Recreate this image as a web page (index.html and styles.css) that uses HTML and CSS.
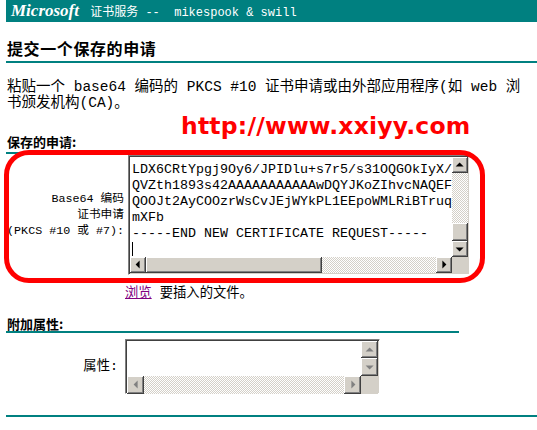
FILE: index.html
```html
<!DOCTYPE html>
<html lang="zh-CN">
<head>
    <meta charset="UTF-8">
    <title>Microsoft 证书服务</title>
    <link rel="stylesheet" href="styles.css">
</head>
<body>
    <div class="banner">
        <span class="ms">Microsoft</span> 证书服务 --&nbsp; mikespook &amp; swill
    </div>

    <div class="page">
        <h2 class="title">提交一个保存的申请</h2>

        <p class="intro">粘贴一个 base64 编码的 PKCS #10 证书申请或由外部应用程序(如 web 浏<br>书颁发机构(CA)。</p>

        <h3 class="section">保存的申请:</h3>

        <div class="row row-request">
            <div class="label">Base64 编码<br>证书申请<br>(PKCS #10 或 #7):</div>
            <div class="box box-request">
                <div class="text">LDX6CRtYpgj9Oy6/JPIDlu+s7r5/s31OQGOkIyX/
QVZth1893s42AAAAAAAAAAAwDQYJKoZIhvcNAQEF
QOOJt2AyCOOzrWsCvJEjWYkPL1EEpoWMLRiBTruq
mXFb
-----END NEW CERTIFICATE REQUEST-----
<span class="caret"></span></div>
                <div class="vbar">
                    <div class="btn up"></div>
                    <div class="track"></div>
                    <div class="btn thumb"></div>
                    <div class="btn down"></div>
                </div>
                <div class="hbar">
                    <div class="btn left"></div>
                    <div class="btn thumb"></div>
                    <div class="track"></div>
                    <div class="btn right"></div>
                </div>
                <div class="corner"></div>
            </div>
        </div>

        <div class="browse"><a href="#">浏览</a> 要插入的文件。</div>

        <h3 class="section section-attr">附加属性:</h3>

        <div class="row row-attr">
            <div class="label">属性:</div>
            <div class="box box-attr">
                <div class="text"></div>
                <div class="vbar">
                    <div class="btn up off"></div>
                    <div class="btn down off"></div>
                </div>
                <div class="hbar">
                    <div class="btn left off"></div>
                    <div class="track"></div>
                    <div class="btn right off"></div>
                </div>
                <div class="corner"></div>
            </div>
        </div>

        <div class="rule"></div>
    </div>

    <!-- watermark + red marker drawn over the page -->
    <div class="mark">http://www.xxiyy.com</div>
    <div class="ring"></div>
</body>
</html>
```

FILE: styles.css
```css
:root {
    --teal: #008080;
    --face: #d4d0c8;
    --shadow: #808080;
    --dark: #404040;
}

* {
    margin: 0;
    padding: 0;
    box-sizing: border-box;
}

body {
    font-family: "Liberation Mono", "Noto Sans CJK SC", monospace;
    font-size: 13.33px;
    line-height: 16px;
    color: #000;
    background: #fff;
    width: 537px;
    height: 430px;
    overflow: hidden;
    position: relative;
}

.banner {
    margin-left: 6px;
    height: 22px;
    background: var(--teal);
    color: #fff;
    font-size: 12px;
    line-height: 22px;
    padding-left: 5px;
    white-space: nowrap;
}

.banner .ms {
    font-family: "Liberation Serif", serif;
    font-style: italic;
    font-weight: bold;
    font-size: 17px;
    margin-right: 4px;
}

.page {
    padding-left: 6px;
}

.title {
    font-family: "Noto Sans CJK SC", sans-serif;
    font-size: 16px;
    font-weight: bold;
    letter-spacing: 0.6px;
    line-height: 20px;
    margin-top: 16px;
    padding-left: 1px;
    padding-bottom: 3px;
    border-bottom: 2px solid var(--teal);
    width: 531px;
}

.intro {
    margin-top: 16px;
    padding-left: 1px;
    font-size: 14.5px;
    white-space: nowrap;
}

.section {
    font-family: "Noto Sans CJK SC", sans-serif;
    font-size: 13px;
    font-weight: bold;
    line-height: 16px;
    margin-top: 23px;
    padding-left: 1px;
    padding-bottom: 2px;
    border-bottom: 2px solid var(--teal);
    width: 453px;
}

.section-attr {
    margin-top: 14px;
    line-height: 15px;
    padding-bottom: 0;
}

.row {
    display: flex;
    align-items: center;
}

.row-request {
    margin-top: 1px;
    gap: 4px;
}

.row-request .label {
    width: 118px;
    font-size: 11.7px;
}

.row-attr {
    margin-top: 6px;
    gap: 7px;
}

.row-attr .label {
    width: 112px;
}

.label {
    text-align: right;
    white-space: nowrap;
    line-height: 16px;
}

/* classic sunken text box with fake scrollbars */
.box {
    display: grid;
    border-style: solid;
    border-width: 1px;
    border-color: var(--shadow) #fff #fff var(--shadow);
    box-shadow: inset 1px 1px var(--dark), inset -1px -1px var(--face);
    padding: 1px;
    background: #fff;
}

.box-request {
    width: 342px;
    height: 120px;
    grid-template-columns: 1fr 16px;
    grid-template-rows: 1fr 16px;
}

.box-attr {
    width: 255px;
    height: 55px;
    grid-template-columns: 1fr 17px;
    grid-template-rows: 1fr 18px;
}

.text {
    white-space: pre;
    overflow: hidden;
    padding: 5px 0 0 2px;
    line-height: 16px;
}

.caret {
    display: inline-block;
    width: 1px;
    height: 14px;
    background: #000;
    vertical-align: -3px;
}

.vbar, .hbar {
    display: flex;
    background: var(--face);
}

.vbar {
    flex-direction: column;
}

.box-request .vbar .btn { height: 16px; }
.box-request .vbar .thumb { height: 18px; }
.box-request .hbar .btn { width: 16px; }
.box-request .hbar .thumb { width: 176px; }

.box-attr .vbar .up { height: 17px; }
.box-attr .vbar .down { height: 18px; }
.box-attr .hbar .btn { width: 17px; }

.track {
    flex: 1;
    background-color: #fff;
    background-image: repeating-conic-gradient(var(--face) 0 25%, #fff 0 50%);
    background-size: 2px 2px;
}

.btn {
    flex: none;
    position: relative;
    background: var(--face);
    box-shadow: inset -1px -1px var(--dark), inset 1px 1px #fff, inset -2px -2px var(--shadow);
}

.btn::after {
    content: "";
    position: absolute;
    left: 50%;
    top: 50%;
    width: 0;
    height: 0;
    border: 4px solid transparent;
}

.btn.thumb::after {
    display: none;
}

.btn.up::after {
    border-top-width: 0;
    border-bottom: 4px solid #000;
    transform: translate(-55%, -60%);
}

.btn.down::after {
    border-bottom-width: 0;
    border-top: 4px solid #000;
    transform: translate(-55%, -40%);
}

.btn.left::after {
    border-left-width: 0;
    border-right: 4px solid #000;
    transform: translate(-60%, -55%);
}

.btn.right::after {
    border-right-width: 0;
    border-left: 4px solid #000;
    transform: translate(-40%, -55%);
}

.btn.off.up::after { border-bottom-color: var(--shadow); }
.btn.off.down::after { border-top-color: var(--shadow); }
.btn.off.left::after { border-right-color: var(--shadow); }
.btn.off.right::after { border-left-color: var(--shadow); }

.corner {
    background: var(--face);
}

.browse {
    margin-top: 9px;
    margin-left: 119px;
}

.browse a {
    color: #800080;
    font-family: "Noto Sans CJK SC", sans-serif;
}

.rule {
    margin-top: 21px;
    height: 2px;
    width: 531px;
    background: var(--teal);
}

.mark {
    position: absolute;
    left: 181px;
    top: 112px;
    font-family: "DejaVu Sans", sans-serif;
    font-weight: bold;
    font-size: 23.5px;
    letter-spacing: 0.2px;
    line-height: 28px;
    color: #ff0000;
    white-space: nowrap;
}

.ring {
    position: absolute;
    left: 4px;
    top: 150px;
    width: 481px;
    height: 133px;
    border: 5px solid #ff0000;
    border-radius: 25px;
}
```
